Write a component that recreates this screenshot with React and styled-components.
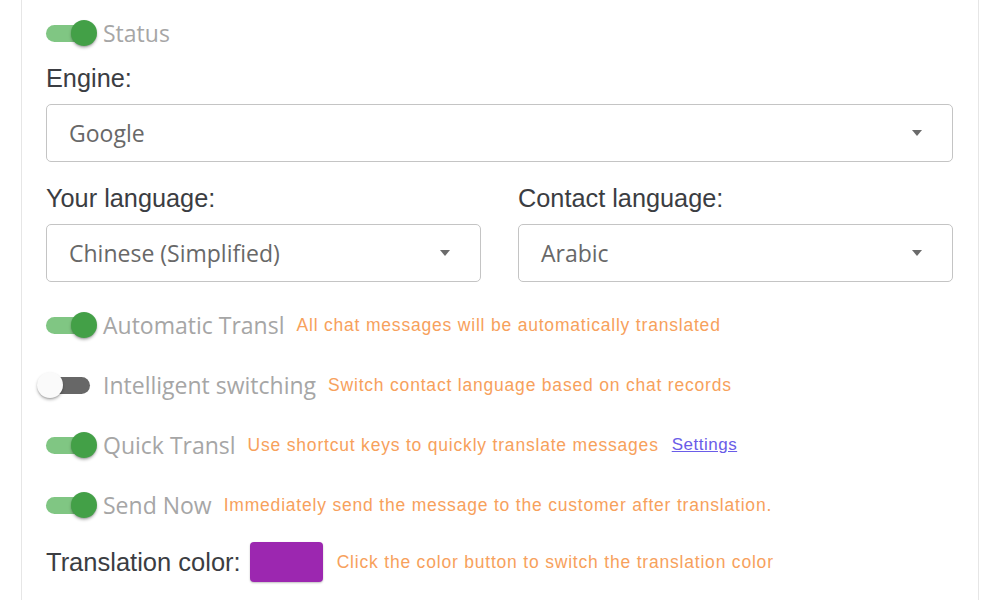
import React from 'react';
import styled, { createGlobalStyle } from 'styled-components';

const GlobalStyle = createGlobalStyle`
  body {
    margin: 0;
    background: #fff;
    font-family: 'Liberation Sans', Arial, sans-serif;
  }
`;

const Panel = styled.div`
  margin-left: 21px;
  width: 958px;
  height: 600px;
  box-sizing: border-box;
  border-left: 1px solid #e6e6e6;
  border-right: 1px solid #e6e6e6;
  padding: 20px 25px 0 24px;
  display: flex;
  flex-direction: column;
`;

const ToggleRow = styled.div`
  display: flex;
  align-items: center;
  height: 26px;
  margin-top: ${(p) => p.top || 0}px;
`;

const SwitchRoot = styled.span`
  position: relative;
  flex-shrink: 0;
  width: 51px;
  height: 26px;
  margin-right: 6px;
`;

const Track = styled.span`
  position: absolute;
  left: 0;
  top: 5px;
  width: 44px;
  height: 17px;
  border-radius: 9px;
  background: ${(p) => (p.on ? '#80c683' : '#676767')};
`;

const Thumb = styled.span`
  position: absolute;
  top: 0;
  left: ${(p) => (p.on ? '25px' : '-9px')};
  width: 26px;
  height: 26px;
  border-radius: 50%;
  background: ${(p) => (p.on ? '#43a047' : '#fafafa')};
  box-shadow: 0 2px 3px rgba(0, 0, 0, 0.25), 0 1px 1px rgba(0, 0, 0, 0.12);
`;

const ToggleLabel = styled.span`
  font-family: 'Open Sans', 'Noto Sans', sans-serif;
  font-size: 23px;
  color: #a6a6a6;
  white-space: nowrap;
  margin-right: 12px;
`;

const Hint = styled.span`
  font-family: 'Liberation Sans', Arial, sans-serif;
  font-size: 17.5px;
  letter-spacing: 0.8px;
  color: #f7a15c;
  white-space: nowrap;
`;

const LinkText = styled.a`
  font-family: 'Liberation Sans', Arial, sans-serif;
  font-size: 17px;
  letter-spacing: 0.5px;
  color: #6a5ce8;
  text-decoration: underline;
  margin-left: 13px;
  cursor: pointer;
`;

const FieldLabel = styled.div`
  font-size: 25.3px;
  line-height: 30px;
  color: #3b3d42;
  margin-top: ${(p) => p.top || 0}px;
  margin-bottom: 11px;
`;

const SelectBox = styled.div`
  display: flex;
  align-items: center;
  justify-content: space-between;
  height: 58px;
  box-sizing: border-box;
  border: 1px solid #c4c4c4;
  border-radius: 5px;
  padding: 0 30px 0 22px;
  font-family: 'Open Sans', 'Noto Sans', sans-serif;
  font-size: 23px;
  color: #686868;
`;

const Caret = styled.span`
  width: 0;
  height: 0;
  border-left: 5.5px solid transparent;
  border-right: 5.5px solid transparent;
  border-top: 6px solid #6b6b6b;
`;

const Columns = styled.div`
  display: grid;
  grid-template-columns: 1fr 1fr;
  column-gap: 37px;
`;

const ColorRow = styled.div`
  display: flex;
  align-items: center;
  margin-top: 24px;
`;

const ColorLabel = styled.span`
  font-size: 25.5px;
  color: #3b3d42;
  margin-right: 9px;
`;

const ColorSwatch = styled.span`
  width: 73px;
  height: 40px;
  border-radius: 4px;
  background: ${(p) => p.color};
  box-shadow: 0 1px 2px rgba(0, 0, 0, 0.25);
  margin-right: 14px;
`;

const Switch = ({ on }) => (
  <SwitchRoot>
    <Track on={on ? 1 : 0} />
    <Thumb on={on ? 1 : 0} />
  </SwitchRoot>
);

const Select = ({ value }) => (
  <SelectBox>
    <span>{value}</span>
    <Caret />
  </SelectBox>
);

const toggles = [
  { label: 'Automatic Transl', hint: 'All chat messages will be automatically translated', on: true, top: 30 },
  { label: 'Intelligent switching', hint: 'Switch contact language based on chat records', on: false, top: 34 },
  { label: 'Quick Transl', hint: 'Use shortcut keys to quickly translate messages', on: true, top: 34, link: 'Settings' },
  { label: 'Send Now', hint: 'Immediately send the message to the customer after translation.', on: true, top: 34 },
];

export default function App() {
  return (
    <>
      <GlobalStyle />
      <Panel>
        <ToggleRow>
          <Switch on />
          <ToggleLabel>Status</ToggleLabel>
        </ToggleRow>

        <FieldLabel top={17}>Engine:</FieldLabel>
        <Select value='Google' />

        <Columns>
          <div>
            <FieldLabel top={21}>Your language:</FieldLabel>
            <Select value='Chinese (Simplified)' />
          </div>
          <div>
            <FieldLabel top={21}>Contact language:</FieldLabel>
            <Select value='Arabic' />
          </div>
        </Columns>

        {toggles.map((t) => (
          <ToggleRow key={t.label} top={t.top}>
            <Switch on={t.on} />
            <ToggleLabel>{t.label}</ToggleLabel>
            <Hint>{t.hint}</Hint>
            {t.link && <LinkText>{t.link}</LinkText>}
          </ToggleRow>
        ))}

        <ColorRow>
          <ColorLabel>Translation color:</ColorLabel>
          <ColorSwatch color='#9c27b0' />
          <Hint>Click the color button to switch the translation color</Hint>
        </ColorRow>
      </Panel>
    </>
  );
}
